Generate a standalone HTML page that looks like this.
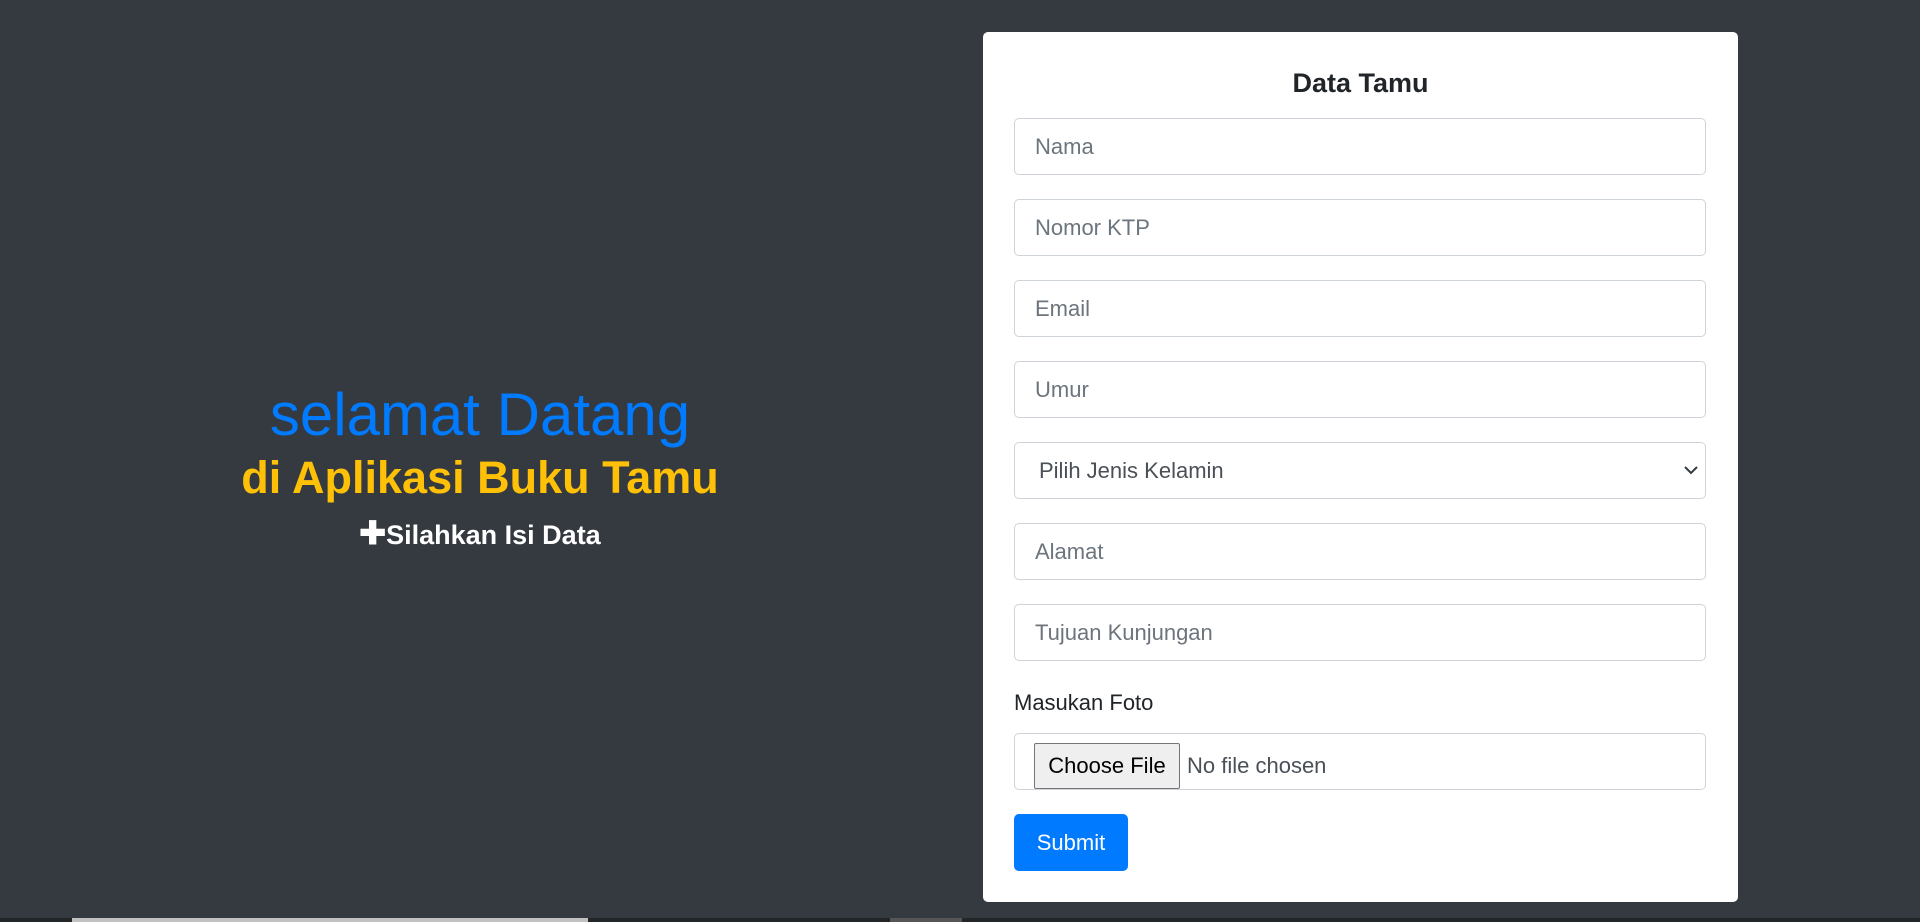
<!DOCTYPE html>
<html><head><style>
*{box-sizing:border-box;margin:0;padding:0}
html,body{width:1920px;height:922px;overflow:hidden;background:#343a40;font-family:"Liberation Sans",sans-serif;position:relative}
.l{position:absolute;left:0;width:960px;text-align:center;white-space:nowrap}
.card{position:absolute;left:983px;top:32px;width:755px;height:870px;background:#fff;border-radius:5px}
.in{position:absolute;left:31px;width:692px;height:57px;border:1px solid #ced4da;border-radius:5px;font-size:22px;color:#6c757d;padding-left:20px;line-height:55px}
.bar{position:absolute;top:918px;height:4px}
</style></head><body>
<div class="l" style="top:380px;font-size:60px;color:#007bff;line-height:70px">selamat Datang</div>
<div class="l" style="top:450px;font-size:45px;font-weight:bold;color:#ffc107;line-height:56px">di Aplikasi Buku Tamu</div>
<div class="l" style="top:516px;font-size:27px;font-weight:bold;color:#fff;line-height:34px"><span style="font-size:32px">✚</span>Silahkan Isi Data</div>
<div class="card">
<div style="position:absolute;top:36px;width:100%;text-align:center;font-size:27px;font-weight:bold;color:#212529">Data Tamu</div>
<div class="in" style="top:86px">Nama</div>
<div class="in" style="top:167px">Nomor KTP</div>
<div class="in" style="top:248px">Email</div>
<div class="in" style="top:329px">Umur</div>
<div class="in" style="top:410px;color:#495057;padding-left:24px">Pilih Jenis Kelamin
<svg style="position:absolute;right:6px;top:21px" width="16" height="12" viewBox="0 0 16 12"><path d="M2 3l6 6 6-6" fill="none" stroke="#343a40" stroke-width="2"/></svg></div>
<div class="in" style="top:491px">Alamat</div>
<div class="in" style="top:572px">Tujuan Kunjungan</div>
<div style="position:absolute;left:31px;top:658px;font-size:22px;color:#212529">Masukan Foto</div>
<div class="in" style="top:701px;padding:0;color:#495057">
<div style="position:absolute;left:19px;top:9px;width:146px;height:46px;background:#efefef;border:1px solid #767676;border-radius:2px;color:#000;font-size:22px;line-height:44px;text-align:center">Choose File</div>
<span style="position:absolute;left:172px;top:4px">No file chosen</span></div>
<div style="position:absolute;left:31px;top:782px;width:114px;height:57px;background:#007bff;border-radius:5px;color:#fff;font-size:22px;line-height:57px;text-align:center">Submit</div>
</div>
<div class="bar" style="left:0;width:1920px;background:#232629"></div>
<div class="bar" style="left:72px;width:516px;background:#c1c1c1"></div>
<div class="bar" style="left:890px;width:72px;background:#555"></div>
</body></html>
